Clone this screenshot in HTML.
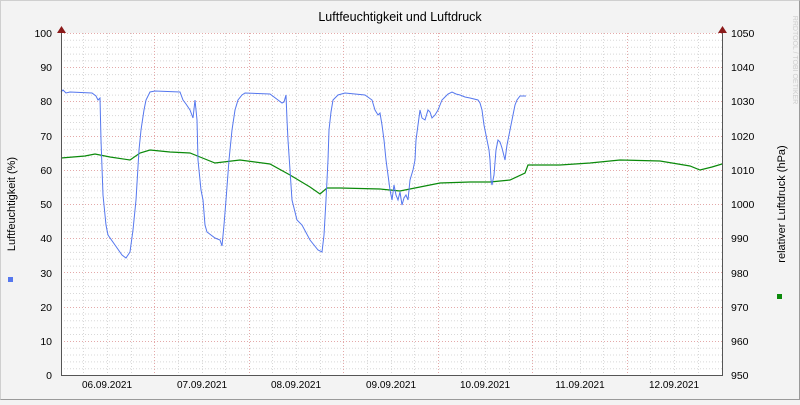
<!DOCTYPE html><html><head><style>body{margin:0;background:#f3f3f3}</style></head><body>
<svg width="800" height="400" xmlns="http://www.w3.org/2000/svg" font-family="Liberation Sans, DejaVu Sans, sans-serif">
<rect x="0" y="0" width="800" height="400" fill="#f3f3f3"/>
<rect x="0.5" y="0.5" width="799" height="399" fill="none" stroke="#cfcfcf"/>
<path d="M0.5 399.5H799.5V0.5" fill="none" stroke="#9a9a9a"/>
<rect x="61" y="33" width="662" height="342" fill="#fff"/>
<g stroke="#d8d8d8" stroke-dasharray="1,2" stroke-width="1">
<path d="M61 40.3H723M61 47.2H723M61 54.1H723M61 60.9H723M61 74.6H723M61 81.4H723M61 88.3H723M61 95.1H723M61 108.8H723M61 115.6H723M61 122.5H723M61 129.3H723M61 143H723M61 149.8H723M61 156.7H723M61 163.5H723M61 177.2H723M61 184H723M61 190.9H723M61 197.7H723M61 211.4H723M61 218.2H723M61 225.1H723M61 231.9H723M61 245.6H723M61 252.4H723M61 259.3H723M61 266.1H723M61 279.8H723M61 286.6H723M61 293.5H723M61 300.3H723M61 314H723M61 320.8H723M61 327.7H723M61 334.5H723M61 348.2H723M61 355H723M61 361.9H723M61 368.7H723"/>
<path d="M83.5 33V375M107.5 33V375M131.5 33V375M178.5 33V375M202.5 33V375M225.5 33V375M272.5 33V375M296.5 33V375M320.5 33V375M367.5 33V375M391.5 33V375M414.5 33V375M461.5 33V375M485.5 33V375M509.5 33V375M556.5 33V375M580.5 33V375M603.5 33V375M650.5 33V375M674.5 33V375M698.5 33V375"/>
</g>
<g stroke="#e4a9a9" stroke-dasharray="1,2" stroke-width="1">
<path d="M61 33.5H723M61 67.5H723M61 101.5H723M61 136.5H723M61 170.5H723M61 204.5H723M61 238.5H723M61 272.5H723M61 307.5H723M61 341.5H723"/>
<path d="M154.5 33V375M249.5 33V375M343.5 33V375M438.5 33V375M532.5 33V375M627.5 33V375"/>
</g>
<polyline fill="none" stroke="#0b8a0b" stroke-width="1.2" points="61,158 85,156 95,154 110,157 130,160 140,153 150,150 170,152 190,153 200,157 215,163 240,160 270,164 290,175 310,187 320,194 327,188 340,188 380,189 400,191 420,187 440,183 470,182 490,182 510,180 525,173 528,165 560,165 590,163 620,160 660,161 690,166 700,170 712,167 722,164"/>
<polyline fill="none" stroke="#5577ee" stroke-width="1" points="61,92 63,90 66,93 70,92 92,93 96,96 98,100 100,98 101,140 103,195 106,225 108,235 115,245 122,255 126,258 130,252 133,230 136,200 139,150 141,130 144,110 146,100 150,92 155,91 180,92 183,100 186,104 190,110 193,118 195,100 197,120 198,160 201,190 203,200 205,225 207,232 215,238 220,240 222,246 224,225 226,200 229,160 232,130 235,110 238,100 242,95 245,93 270,94 278,100 282,103 284,102 286,95 287,120 288,140 290,170 292,200 297,220 302,225 310,240 318,250 322,252 324,235 326,200 328,160 329,130 331,112 333,100 338,95 345,93 365,95 372,100 375,110 378,115 380,113 382,125 384,140 386,160 388,175 390,190 392,200 394,185 396,195 398,200 400,192 402,205 404,198 406,195 408,200 410,180 413,170 415,160 416,140 418,125 420,110 422,118 425,120 428,110 430,112 432,118 435,115 438,110 440,105 442,100 445,97 448,94 452,92 456,94 460,95 465,97 470,98 478,100 480,103 482,110 484,125 487,140 489,150 490,160 491,180 492,185 494,175 496,150 498,140 500,142 502,148 505,160 507,145 510,130 512,120 515,105 517,100 520,96 526,96"/>
<path d="M61.5 33V376M61 375.5H723M722.5 33V376" stroke="#555" stroke-width="1"/>
<path d="M57 33L61.5 26L66 33Z M718 33L722.5 26L727 33Z" fill="#8b1a1a"/>
<g font-size="10.5" fill="#000" text-anchor="end">
<text x="52" y="37">100</text><text x="52" y="71">90</text><text x="52" y="105">80</text><text x="52" y="140">70</text><text x="52" y="174">60</text><text x="52" y="208">50</text><text x="52" y="242">40</text><text x="52" y="277">30</text><text x="52" y="311">20</text><text x="52" y="345">10</text><text x="52" y="379">0</text>
</g>
<g font-size="10.5" fill="#000">
<text x="731" y="37">1050</text><text x="731" y="71">1040</text><text x="731" y="105">1030</text><text x="731" y="140">1020</text><text x="731" y="174">1010</text><text x="731" y="208">1000</text><text x="731" y="242">990</text><text x="731" y="277">980</text><text x="731" y="311">970</text><text x="731" y="345">960</text><text x="731" y="379">950</text>
</g>
<g font-size="10" fill="#000" text-anchor="middle">
<text x="107" y="388">06.09.2021</text><text x="202" y="388">07.09.2021</text><text x="296" y="388">08.09.2021</text><text x="391" y="388">09.09.2021</text><text x="485" y="388">10.09.2021</text><text x="580" y="388">11.09.2021</text><text x="674" y="388">12.09.2021</text>
</g>
<text x="400" y="21" font-size="12.5" text-anchor="middle" fill="#000">Luftfeuchtigkeit und Luftdruck</text>
<text transform="translate(15,204) rotate(-90)" font-size="11" text-anchor="middle" fill="#000">Luftfeuchtigkeit (%)</text>
<text transform="translate(785,204) rotate(-90)" font-size="11" text-anchor="middle" fill="#000">relativer Luftdruck (hPa)</text>
<text transform="translate(793,60) rotate(90)" font-size="7" text-anchor="middle" fill="#ccc">RRDTOOL / TOBI OETIKER</text>
<rect x="8" y="277" width="5" height="5" fill="#5577ee"/>
<rect x="777" y="294" width="5" height="5" fill="#0b8a0b"/>
</svg>
</body></html>
